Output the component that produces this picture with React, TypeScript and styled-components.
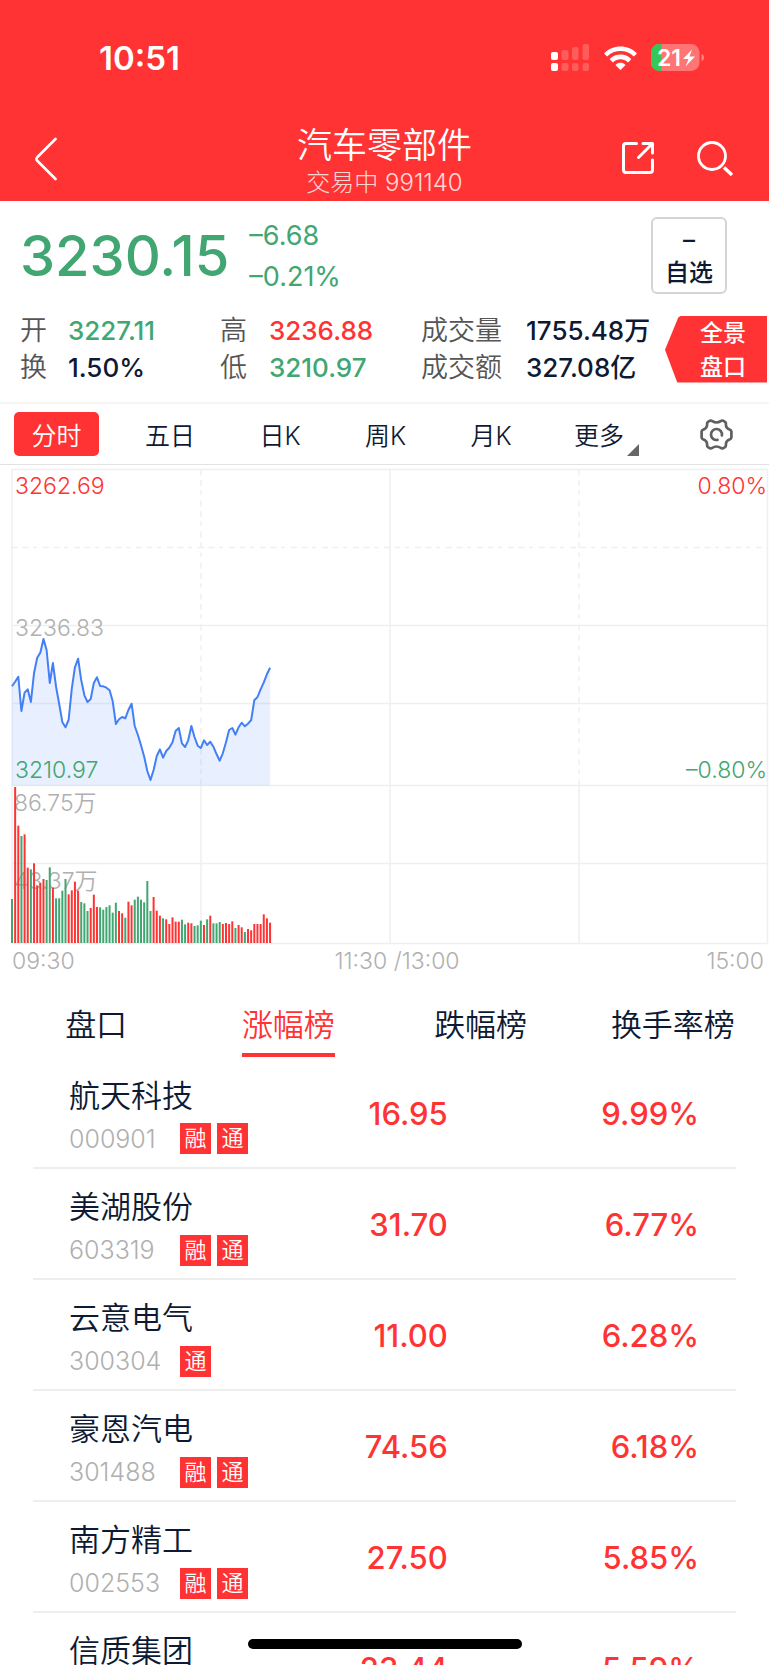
import React from 'react';
import styled, { createGlobalStyle } from 'styled-components';

const RED = '#ff3333';
const GREEN = '#41a671';
const INK = '#0e1a33';
const GREY = '#b0b0b0';
const LINE = '#efefef';
const FONT = "Inter, 'Noto Sans CJK SC', sans-serif";

const Global = createGlobalStyle`
  * { box-sizing: border-box; }
  body { margin: 0; background: #fff; color: ${INK}; font-family: ${FONT}; }
  button { font-family: inherit; color: inherit; background: none; border: 0; padding: 0; cursor: pointer; }
  svg { display: block; }
`;

const Screen = styled.div`
  display: flex;
  flex-direction: column;
  height: 100vh;
  overflow: hidden;
`;

/* ---------- header ---------- */
const Header = styled.header`
  flex: none;
  background: ${RED};
  color: #fff;
`;
const StatusBar = styled.div`
  display: flex;
  align-items: center;
  justify-content: space-between;
  height: 116px;
  padding: 0 65px 0 99px;
`;
const Clock = styled.time`
  font-size: 33px;
  line-height: 40px;
  font-weight: 600;
`;
const StatusIcons = styled.div`
  display: flex;
  align-items: center;
  gap: 14px;
`;
const NavBar = styled.nav`
  display: grid;
  grid-template-columns: 1fr auto 1fr;
  align-items: center;
  height: 85px;
  padding: 0 36px 0 34px;
`;
const NavActions = styled.div`
  display: flex;
  justify-content: flex-end;
  gap: 42px;
`;
const IconButton = styled.button`
  display: flex;
  justify-self: start;
`;
const Heading = styled.div`
  padding: 7px 0 0 2px;
  text-align: center;
`;
const Title = styled.h1`
  margin: 0;
  font-size: 35px;
  line-height: 40px;
  font-weight: 350;
`;
const Subtitle = styled.p`
  margin: 0;
  font-size: 24px;
  line-height: 35px;
  font-weight: 300;
  opacity: 0.8;
`;

/* ---------- quote summary ---------- */
const Summary = styled.section`
  flex: none;
  padding: 16px 0 0 20px;
  border-bottom: 2px solid #f5f5f5;
`;
const QuoteRow = styled.div`
  display: flex;
  align-items: center;
  padding-right: 42px;
  height: 77px;
`;
const Price = styled.strong`
  font-size: 56px;
  line-height: 64px;
  font-weight: 500;
  color: ${GREEN};
`;
const Changes = styled.div`
  flex: 1;
  margin-left: 20px;
  font-size: 27px;
  line-height: 41px;
  color: ${GREEN};
`;
const WatchButton = styled.button`
  && {
    width: 76px;
    height: 77px;
    border: 2px solid #d4d4d4;
    border-radius: 6px;
    font-size: 24px;
    line-height: 33px;
    font-weight: 450;
  }
`;
const StatsRow = styled.div`
  display: flex;
  align-items: center;
  justify-content: space-between;
  padding: 18px 2px 16px 0;
`;
const Stats = styled.dl`
  flex: 1;
  display: grid;
  grid-template-columns: 48px 152px 49px 152px 105px 1fr;
  margin: 0;
  font-size: 27px;
  line-height: 37px;
  white-space: nowrap;
  dt { color: #555; font-weight: 350; }
  dd { margin: 0; }
`;
const StatValue = styled.dd<{ $color?: string }>`
  font-size: 26px;
  font-weight: 450;
  color: ${(p) => p.$color ?? INK};
`;
const PanoramaButton = styled.button`
  && {
    flex: none;
    width: 102px;
    height: 67px;
    padding-left: 14px;
    color: #fff;
    background: ${RED};
    clip-path: polygon(0 51%, 13% 3%, 16% 0, 100% 0, 100% 100%, 12% 100%);
    font-size: 23px;
    line-height: 34px;
    font-weight: 500;
  }
`;

/* ---------- period tabs ---------- */
const Periods = styled.nav`
  flex: none;
  display: grid;
  grid-template-columns: 113px 114px 106px 105px 106px 110px 1fr;
  align-items: center;
  height: 61px;
  border-bottom: 1px solid #e2e2e2;
`;
const PeriodTab = styled.button<{ $active?: boolean }>`
  && {
    position: relative;
    justify-self: center;
    padding: 0 17px;
    height: 44px;
    border-radius: 5px;
    font-size: 25px;
    font-weight: 350;
    white-space: nowrap;
    color: ${(p) => (p.$active ? '#fff' : INK)};
    background: ${(p) => (p.$active ? RED : 'none')};
  }
`;
const Corner = styled.i`
  position: absolute;
  right: 2px;
  bottom: 0;
  border: 6px solid;
  border-color: transparent #666 #666 transparent;
`;
const Settings = styled(IconButton)`
  && { justify-self: center; padding-left: 10px; }
`;

/* ---------- chart ---------- */
const Chart = styled.svg`
  flex: none;
  width: 100%;
  height: auto;
  font-family: ${FONT};
  font-size: 23px;
  font-weight: 350;
`;

/* ---------- ranking ---------- */
const RankTabs = styled.nav`
  flex: none;
  display: grid;
  grid-template-columns: repeat(4, 1fr);
  justify-items: center;
  padding-top: 6px;
`;
const RankTab = styled.button<{ $active?: boolean }>`
  && {
    height: 66px;
    border-bottom: 4px solid ${(p) => (p.$active ? RED : 'transparent')};
    font-size: 31px;
    font-weight: 350;
    color: ${(p) => (p.$active ? RED : INK)};
  }
`;
const Scroller = styled.div`
  flex: 1;
  min-height: 0;
  overflow-y: auto;
  scrollbar-width: none;
  padding: 0 33px;
`;
const Table = styled.table`
  width: 100%;
  table-layout: fixed;
  border-collapse: collapse;
`;
const Row = styled.tr`
  height: 111px;
  border-bottom: 2px solid #eeeeee;
`;
const StockCell = styled.th`
  width: 32%;
  padding: 9px 0 0 36px;
  text-align: left;
  font-weight: 350;
`;
const StockName = styled.div`
  font-size: 31px;
  line-height: 44px;
  white-space: nowrap;
`;
const StockMeta = styled.div`
  display: flex;
  align-items: center;
  gap: 6px;
  height: 42px;
`;
const Code = styled.span`
  width: 105px;
  font-size: 25px;
  line-height: 32px;
  font-weight: 350;
  color: ${GREY};
`;
const Tag = styled.span`
  width: 31px;
  height: 31px;
  color: #fff;
  background: ${RED};
  font-size: 22px;
  line-height: 31px;
  text-align: center;
`;
const NumberCell = styled.td<{ $end?: boolean }>`
  width: ${(p) => (p.$end ? 41 : 27)}%;
  padding: 3px ${(p) => (p.$end ? 37 : 0)}px 0 0;
  text-align: right;
  font-size: 31px;
  line-height: 40px;
  font-weight: 450;
  color: ${RED};
`;
const HomeIndicator = styled.div`
  position: fixed;
  left: 50%;
  bottom: 16px;
  width: 274px;
  height: 10px;
  margin-left: -137px;
  border-radius: 5px;
  background: #000;
`;

/* one value per minute since 09:30, in chart units */
const PRICE_Y = [
  679, 665, 650, 753, 698, 688, 726, 640, 593, 578, 537, 570, 669, 609, 681, 732, 787, 802, 780, 686, 622, 596, 660, 706,
  726, 717, 669, 652, 678, 679, 683, 691, 724, 792, 778, 771, 775, 750, 731, 798, 825, 856, 890, 933, 960, 930, 888, 868,
  893, 873, 863, 847, 813, 804, 850, 861, 841, 798, 831, 857, 864, 841, 855, 845, 860, 883, 902, 880, 847, 810, 804, 824,
  802, 788, 799, 791, 780, 721, 711, 688, 667, 643, 623,
].map((v) => v / 3 - 5);

const VOLUME_H = [
  132, 468, 352, 321, 326, 226, 221, 239, 173, 180, 192, 189, 227, 166, 134, 134, 157, 192, 146, 158, 184, 157, 123, 119,
  96, 105, 145, 108, 107, 100, 108, 113, 91, 121, 96, 89, 76, 124, 113, 130, 139, 130, 122, 186, 96, 138, 97, 82, 74, 71,
  57, 77, 64, 64, 70, 56, 61, 59, 51, 53, 67, 54, 71, 82, 59, 59, 63, 57, 60, 57, 65, 45, 54, 47, 33, 42, 38, 57, 57, 57,
  86, 74, 61,
].map((v) => v / 3);
const VOLUME_DIR = 'grrgrrgrrrrggrggggrrrrgggrrrggggggrrgrrggggggrrrgrrrrrggrrgggrgrgggrrrrgrrgrrrrrrrr';

const X0 = 12;
const STEP = 3.147;
const xAt = (i: number) => X0 + i * STEP;
const linePath = PRICE_Y.map((y, i) => `${i ? 'L' : 'M'}${xAt(i).toFixed(1)} ${y.toFixed(1)}`).join('');

/* the drawing starts just under the period tabs; y = 0 there */
const TrendChart = () => (
  <Chart viewBox="0 0 769 520" role="img" aria-label="分时走势">
    <g stroke={LINE} strokeWidth="1.5" fill="none">
      <path d="M12 4.5H767.5M12 160.5H767.5M12 238.5H767.5M12 320.5H767.5M12 398.5H767.5M12 478.5H767.5" />
      <path d="M12 4.5V478.5M390 4.5V478.5M767.5 4.5V478.5M201 320.5V478.5M579 320.5V478.5" />
      <path d="M12 82.5H767.5" strokeDasharray="6 4.5 6 4.5 4 6" />
      <path d="M201 4.5V320.5M579 4.5V320.5" strokeDasharray="6 4.5 6 4.5 4 6" />
    </g>
    <path d={`${linePath}V320.5H${X0}Z`} fill="#4a86f7" fillOpacity="0.13" />
    <path d={linePath} fill="none" stroke="#437ff5" strokeWidth="2" strokeLinejoin="round" />
    <text x="15" y="29" fill={RED}>3262.69</text>
    <text x="767" y="29" fill={RED} textAnchor="end">0.80%</text>
    <text x="15" y="171" fill={GREY}>3236.83</text>
    <text x="15" y="313" fill={GREEN}>3210.97</text>
    <text x="767" y="313" fill={GREEN} textAnchor="end">–0.80%</text>
    <text x="14" y="346" fill={GREY}>86.75万</text>
    <text x="14" y="424" fill={GREY}>43.37万</text>
    {VOLUME_H.map((h, i) => (
      <rect key={i} x={xAt(i) - 1} y={478 - h} width="2" height={h} fill={VOLUME_DIR[i] === 'r' ? RED : GREEN} />
    ))}
    <g fill={GREY}>
      <text x="12" y="504">09:30</text>
      <text x="397" y="504" textAnchor="middle">11:30 /13:00</text>
      <text x="764" y="504" textAnchor="end">15:00</text>
    </g>
  </Chart>
);

const SignalIcon = () => (
  <svg width="39" height="28" viewBox="0 0 39 28" fill="#fff" aria-hidden="true">
    <rect x="0" y="8" width="7" height="8" rx="2" />
    <rect x="0" y="19" width="7" height="8" rx="2" />
    <g opacity="0.2">
      <rect x="10.500" y="6" width="7" height="10" rx="2" />
      <rect x="21" y="3" width="6.500" height="13" rx="2" />
      <rect x="31.500" y="0" width="6.500" height="16" rx="2" />
      <rect x="10.500" y="19" width="7" height="8" rx="2" />
      <rect x="21" y="19" width="6.500" height="8" rx="2" />
      <rect x="31.500" y="19" width="6.500" height="8" rx="2" />
    </g>
  </svg>
);

const WifiIcon = () => (
  <svg width="33" height="25" viewBox="0 0 33 25" fill="#fff" aria-hidden="true">
    <path d="M16.500 0.500C22.800 0.500 28.400 2.900 32.500 6.900C32.900 7.300 32.900 7.700 32.500 8.100L30.400 10.100C30 10.500 29.600 10.500 29.200 10.100C25.900 6.900 21.400 5.100 16.500 5.100S7.100 6.900 3.800 10.100C3.400 10.500 3 10.500 2.600 10.100L0.500 8.100C0.100 7.700 0.100 7.300 0.500 6.900C4.600 2.900 10.200 0.500 16.500 0.500Z" />
    <path d="M16.500 8.600C20.500 8.600 24.100 10.100 26.800 12.600C27.200 13 27.200 13.400 26.800 13.800L24.600 15.900C24.200 16.300 23.900 16.300 23.500 15.900C21.600 14.200 19.200 13.200 16.500 13.200S11.400 14.200 9.500 15.900C9.100 16.300 8.800 16.300 8.400 15.900L6.200 13.800C5.800 13.400 5.800 13 6.200 12.600C8.900 10.100 12.500 8.600 16.500 8.600Z" />
    <path d="M16.500 16.700C18.300 16.700 19.900 17.300 21.100 18.400C21.500 18.800 21.500 19.100 21.100 19.500L17.100 23.600C16.700 24 16.300 24 15.900 23.600L11.900 19.500C11.500 19.100 11.500 18.800 11.900 18.400C13.100 17.300 14.700 16.700 16.500 16.700Z" />
  </svg>
);

const BatteryIcon = () => (
  <svg width="53" height="28" viewBox="0 0 53 28" aria-label="电量 21">
    <rect x="0" y="0" width="48.500" height="27" rx="8.500" fill="#fff" fillOpacity="0.32" />
    <path d="M10.500 0V27H8.500A8.500 8.500 0 0 1 0 18.500V8.500A8.500 8.500 0 0 1 8.500 0Z" fill="#34c759" />
    <path d="M50.500 10Q53 10.500 53 13.500T50.500 17Z" fill="#fff" fillOpacity="0.4" />
    <text x="6" y="21.500" fontSize="23" fontWeight="600" fill="#fff" fontFamily={FONT}>21</text>
    <path d="M41 5.500L32 15H37.500L34.500 22.500L44 12.500H38.500Z" fill="#fff" />
  </svg>
);

const GearIcon = () => (
  <svg width="33" height="31" viewBox="0 0 33 31" fill="none" stroke="#606060" strokeWidth="2.700" strokeLinecap="round" strokeLinejoin="round" aria-hidden="true">
    <path d="M10 1.700Q11.300 1.200 12.300 2.200Q16.500 4.800 20.700 2.200Q21.700 1.200 23 1.700L25 2.900Q26.100 3.700 25.900 5.200Q25.700 9.400 30 10.800Q31.300 11.400 31.400 12.700V18.300Q31.300 19.600 30 20.200Q25.700 21.600 25.900 25.800Q26.100 27.300 25 28.100L23 29.300Q21.700 29.800 20.700 28.800Q16.500 26.200 12.300 28.800Q11.300 29.800 10 29.300L8 28.100Q6.900 27.300 7.100 25.800Q7.300 21.600 3 20.200Q1.700 19.600 1.600 18.300V12.700Q1.700 11.400 3 10.800Q7.300 9.400 7.100 5.200Q6.900 3.700 8 2.900Z" />
    <path d="M17.500 20.900A5.500 5.500 0 1 1 21.900 16.500" />
  </svg>
);

const STATS: [string, string, string | undefined][] = [
  ['开', '3227.11', GREEN],
  ['高', '3236.88', RED],
  ['成交量', '1755.48万', undefined],
  ['换', '1.50%', undefined],
  ['低', '3210.97', GREEN],
  ['成交额', '327.08亿', undefined],
];

const STOCKS = [
  { name: '航天科技', code: '000901', tags: ['融', '通'], price: '16.95', pct: '9.99%' },
  { name: '美湖股份', code: '603319', tags: ['融', '通'], price: '31.70', pct: '6.77%' },
  { name: '云意电气', code: '300304', tags: ['通'], price: '11.00', pct: '6.28%' },
  { name: '豪恩汽电', code: '301488', tags: ['融', '通'], price: '74.56', pct: '6.18%' },
  { name: '南方精工', code: '002553', tags: ['融', '通'], price: '27.50', pct: '5.85%' },
  { name: '信质集团', code: '', tags: [], price: '23.44', pct: '5.59%' },
];

export default function App() {
  return (
    <Screen>
      <Global />
      <Header>
        <StatusBar>
          <Clock>10:51</Clock>
          <StatusIcons>
            <SignalIcon />
            <WifiIcon />
            <BatteryIcon />
          </StatusIcons>
        </StatusBar>
        <NavBar>
          <IconButton aria-label="返回">
            <svg width="24" height="44" viewBox="0 0 24 44" fill="none" stroke="#fff" strokeWidth="2.600" strokeLinecap="round">
              <path d="M21.500 2L3.500 20Q1.500 22 3.500 24L21.500 42" />
            </svg>
          </IconButton>
          <Heading>
            <Title>汽车零部件</Title>
            <Subtitle>交易中 991140</Subtitle>
          </Heading>
          <NavActions>
            <IconButton aria-label="分享">
              <svg width="34" height="34" viewBox="0 0 34 34" fill="none" stroke="#fff" strokeWidth="3" strokeLinecap="round" strokeLinejoin="round">
                <path d="M15.500 2.500H5Q2.500 2.500 2.500 5V29Q2.500 31.500 5 31.500H29Q31.500 31.500 31.500 29V19" />
                <path d="M22 2.500H31.500V12M31 3L17.500 16.500" />
              </svg>
            </IconButton>
            <IconButton aria-label="搜索">
              <svg width="36" height="36" viewBox="0 0 36 36" fill="none" stroke="#fff" strokeWidth="2.800">
                <circle cx="15" cy="15" r="13.500" />
                <path d="M27 26.500L35 34" strokeWidth="3.400" />
              </svg>
            </IconButton>
          </NavActions>
        </NavBar>
      </Header>

      <Summary>
        <QuoteRow>
          <Price>3230.15</Price>
          <Changes>
            <div>–6.68</div>
            <div>–0.21%</div>
          </Changes>
          <WatchButton>
            –<br />自选
          </WatchButton>
        </QuoteRow>
        <StatsRow>
          <Stats>
            {STATS.map(([label, value, color]) => (
              <React.Fragment key={label}>
                <dt>{label}</dt>
                <StatValue $color={color}>{value}</StatValue>
              </React.Fragment>
            ))}
          </Stats>
          <PanoramaButton>
            全景<br />盘口
          </PanoramaButton>
        </StatsRow>
      </Summary>

      <Periods>
        <PeriodTab $active>分时</PeriodTab>
        <PeriodTab>五日</PeriodTab>
        <PeriodTab>日K</PeriodTab>
        <PeriodTab>周K</PeriodTab>
        <PeriodTab>月K</PeriodTab>
        <PeriodTab>
          更多
          <Corner />
        </PeriodTab>
        <Settings aria-label="设置">
          <GearIcon />
        </Settings>
      </Periods>

      <TrendChart />

      <RankTabs>
        <RankTab>盘口</RankTab>
        <RankTab $active>涨幅榜</RankTab>
        <RankTab>跌幅榜</RankTab>
        <RankTab>换手率榜</RankTab>
      </RankTabs>
      <Scroller>
        <Table>
          <tbody>
            {STOCKS.map((s) => (
              <Row key={s.name}>
                <StockCell scope="row">
                  <StockName>{s.name}</StockName>
                  <StockMeta>
                    <Code>{s.code}</Code>
                    {s.tags.map((t) => (
                      <Tag key={t}>{t}</Tag>
                    ))}
                  </StockMeta>
                </StockCell>
                <NumberCell>{s.price}</NumberCell>
                <NumberCell $end>{s.pct}</NumberCell>
              </Row>
            ))}
          </tbody>
        </Table>
      </Scroller>
      <HomeIndicator />
    </Screen>
  );
}
